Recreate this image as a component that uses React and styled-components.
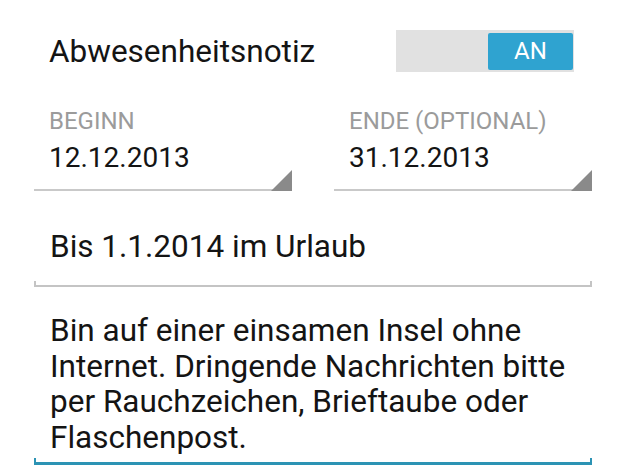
import React from 'react'
import styled, { createGlobalStyle } from 'styled-components'

const GlobalStyle = createGlobalStyle`
  html, body {
    margin: 0;
    padding: 0;
    background: #ffffff;
  }
  body {
    font-family: Roboto, "Liberation Sans", sans-serif;
    color: #141414;
  }
`;

const Page = styled.div`
  width: 628px;
  height: 476px;
  box-sizing: border-box;
  padding: 30px 36px 0 34px;
  overflow: hidden;
`;

const Header = styled.div`
  display: flex;
  align-items: center;
  justify-content: space-between;
  height: 42px;
  padding: 0 18px 0 15px;
`;

const Title = styled.div`
  font-size: 31.5px;
  line-height: 42px;
  padding-top: 2px;
`;

const Toggle = styled.div`
  width: 178px;
  height: 42px;
  box-sizing: border-box;
  padding: 3px 1px 2px 0;
  background: #e1e1e1;
  display: flex;
  justify-content: ${({ on }) => (on ? 'flex-end' : 'flex-start')};
`;

const Thumb = styled.div`
  width: 85px;
  height: 37px;
  border-radius: 2px;
  background: #2fa3d0;
  color: #ffffff;
  font-size: 24px;
  line-height: 37px;
  text-align: center;
`;

const Dates = styled.div`
  display: grid;
  grid-template-columns: 258px 258px;
  column-gap: 42px;
  margin-top: 36px;
`;

const DateField = styled.div`
  position: relative;
  padding: 0 0 15px 15px;
  border-bottom: 2px solid #c9c9c9;

  &::after {
    content: '';
    position: absolute;
    right: 0;
    bottom: -2px;
    width: 0;
    height: 0;
    border-style: solid;
    border-width: 0 0 21px 21px;
    border-color: transparent transparent #8a8a8a transparent;
  }
`;

const Label = styled.div`
  font-size: 24px;
  line-height: 26px;
  color: #9b9b9b;
`;

const Value = styled.div`
  font-size: 28px;
  line-height: 33px;
  margin-top: 7px;
`;

const TextField = styled.div`
  margin-top: ${({ gap }) => gap}px;
`;

const Text = styled.div`
  font-size: 31.5px;
  line-height: ${({ lh }) => lh};
  padding: 0 12px 0 16px;
`;

const Bracket = styled.div`
  box-sizing: border-box;
  height: ${({ h }) => h}px;
  margin-top: ${({ gap }) => gap}px;
  border: 2px solid ${({ color }) => color};
  border-top: none;
  border-bottom-width: ${({ bw }) => bw}px;
`;

export default function App() {
  return (
    <>
      <GlobalStyle />
      <Page>
        <Header>
          <Title>Abwesenheitsnotiz</Title>
          <Toggle on>
            <Thumb>AN</Thumb>
          </Toggle>
        </Header>

        <Dates>
          <DateField>
            <Label>BEGINN</Label>
            <Value>12.12.2013</Value>
          </DateField>
          <DateField>
            <Label>ENDE (OPTIONAL)</Label>
            <Value>31.12.2013</Value>
          </DateField>
        </Dates>

        <TextField gap={38}>
          <Text lh="36px">Bis 1.1.2014 im Urlaub</Text>
          <Bracket h={6} gap={16} bw={2} color="#c4c4c4" />
        </TextField>

        <TextField gap={26}>
          <Text lh="35.5px">
            Bin auf einer einsamen Insel ohne Internet. Dringende Nachrichten bitte per
            Rauchzeichen, Brieftaube oder Flaschenpost.
          </Text>
          <Bracket h={7} gap={3} bw={3} color="#2c93b4" />
        </TextField>
      </Page>
    </>
  )
}
